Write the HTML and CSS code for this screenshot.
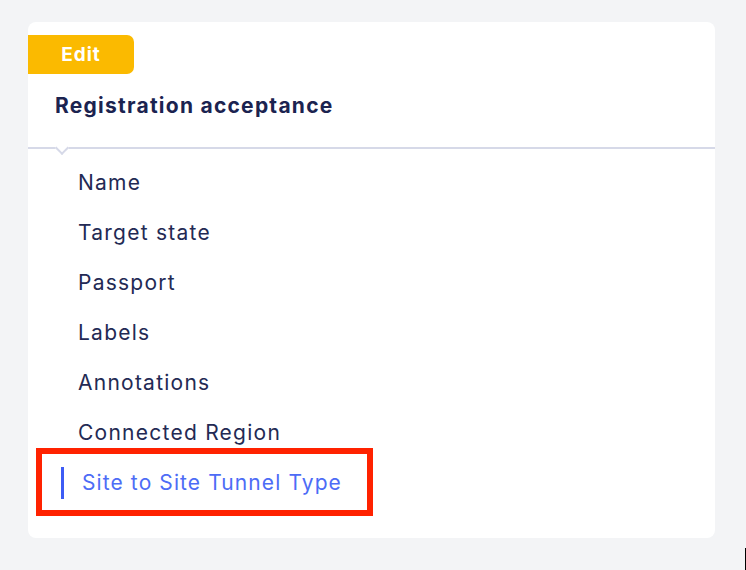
FILE: index.html
```html
<!DOCTYPE html>
<html>
<head>
<meta charset="utf-8">
<link rel="stylesheet" href="styles.css">
</head>
<body>
<div class="page">
  <div class="card">
    <div class="header">
      <div class="badge">Edit</div>
      <h1 class="title">Registration acceptance</h1>
    </div>
    <ul class="list">
      <li class="item">Name</li>
      <li class="item">Target state</li>
      <li class="item">Passport</li>
      <li class="item">Labels</li>
      <li class="item">Annotations</li>
      <li class="item">Connected Region</li>
      <li class="item item-active"><span class="bar"></span><span class="label">Site to Site Tunnel Type</span></li>
    </ul>
  </div>
</div>
<div class="edge-mark"></div>
</body>
</html>
```

FILE: styles.css
```css
*, *::before, *::after { box-sizing: border-box; }
html, body {
  margin: 0;
  padding: 0;
  background: #f3f4f6;
  font-family: Inter, "Noto Sans", sans-serif;
}
.page {
  padding: 22px 31px 0 28px;
  height: 570px;
}
.card {
  background: #ffffff;
  border-radius: 8px;
  height: 516px;
  width: 687px;
}
.header {
  position: relative;
  padding-top: 13px;
  height: 127px;
  border-bottom: 2px solid #d6d9e8;
}
.header::after {
  content: "";
  position: absolute;
  left: 29px;
  bottom: -6px;
  width: 10px;
  height: 10px;
  background: #ffffff;
  border-right: 2px solid #d6d9e8;
  border-bottom: 2px solid #d6d9e8;
  transform: rotate(45deg);
}
.badge {
  width: 106px;
  height: 39px;
  background: #fbba00;
  border-radius: 0 7px 7px 0;
  color: #ffffff;
  font-weight: 700;
  font-size: 19px;
  letter-spacing: 1px;
  line-height: 39px;
  text-align: center;
}
.title {
  margin: 20px 0 0 27px;
  font-size: 21px;
  font-weight: 700;
  letter-spacing: 1.25px;
  color: #1b2350;
  line-height: 24px;
}
.list {
  list-style: none;
  margin: 0;
  padding: 9px 0 0 0;
}
.item {
  height: 50px;
  line-height: 50px;
  padding-left: 50px;
  font-size: 21px;
  letter-spacing: 1.25px;
  color: #232a54;
}
.item-active {
  position: relative;
  display: flex;
  align-items: center;
  padding-left: 33px;
  letter-spacing: 1.1px;
  color: #4d6cf6;
}
.bar {
  width: 3px;
  height: 32px;
  background: #3d5cf5;
  margin-right: 18px;
}
.item-active::after {
  content: "";
  position: absolute;
  left: 8px;
  top: -10px;
  width: 337px;
  height: 68px;
  border: 6px solid #ff2200;
}
.edge-mark {
  position: fixed;
  right: 0;
  top: 548px;
  width: 1px;
  height: 22px;
  background: #000000;
}
```
